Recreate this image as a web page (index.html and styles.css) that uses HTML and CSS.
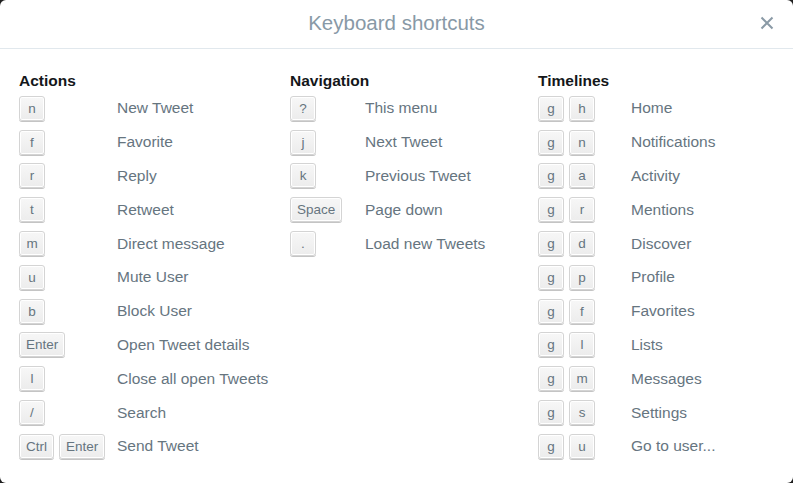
FILE: index.html
```html
<!DOCTYPE html>
<html>
<head>
<meta charset="utf-8">
<link rel="stylesheet" href="styles.css">
</head>
<body>
<div class="modal">
  <div class="header">
    <h1 class="title">Keyboard shortcuts</h1>
    <button class="close" aria-label="Close">
      <svg width="14" height="14" viewBox="0 0 14 14"><path d="M1.5 1.5 L12.5 12.5 M12.5 1.5 L1.5 12.5" stroke="#8a9aa6" stroke-width="2" fill="none"/></svg>
    </button>
  </div>
  <div class="body">
    <section class="col col-actions">
      <h2 class="heading">Actions</h2>
      <div class="row"><div class="keys"><kbd>n</kbd></div><span class="desc">New Tweet</span></div>
      <div class="row"><div class="keys"><kbd>f</kbd></div><span class="desc">Favorite</span></div>
      <div class="row"><div class="keys"><kbd>r</kbd></div><span class="desc">Reply</span></div>
      <div class="row"><div class="keys"><kbd>t</kbd></div><span class="desc">Retweet</span></div>
      <div class="row"><div class="keys"><kbd>m</kbd></div><span class="desc">Direct message</span></div>
      <div class="row"><div class="keys"><kbd>u</kbd></div><span class="desc">Mute User</span></div>
      <div class="row"><div class="keys"><kbd>b</kbd></div><span class="desc">Block User</span></div>
      <div class="row"><div class="keys"><kbd>Enter</kbd></div><span class="desc">Open Tweet details</span></div>
      <div class="row"><div class="keys"><kbd>l</kbd></div><span class="desc">Close all open Tweets</span></div>
      <div class="row"><div class="keys"><kbd>/</kbd></div><span class="desc">Search</span></div>
      <div class="row"><div class="keys"><kbd>Ctrl</kbd><kbd>Enter</kbd></div><span class="desc">Send Tweet</span></div>
    </section>
    <section class="col col-nav">
      <h2 class="heading">Navigation</h2>
      <div class="row"><div class="keys"><kbd>?</kbd></div><span class="desc">This menu</span></div>
      <div class="row"><div class="keys"><kbd>j</kbd></div><span class="desc">Next Tweet</span></div>
      <div class="row"><div class="keys"><kbd>k</kbd></div><span class="desc">Previous Tweet</span></div>
      <div class="row"><div class="keys"><kbd>Space</kbd></div><span class="desc">Page down</span></div>
      <div class="row"><div class="keys"><kbd>.</kbd></div><span class="desc">Load new Tweets</span></div>
    </section>
    <section class="col col-timelines">
      <h2 class="heading">Timelines</h2>
      <div class="row"><div class="keys"><kbd>g</kbd><kbd>h</kbd></div><span class="desc">Home</span></div>
      <div class="row"><div class="keys"><kbd>g</kbd><kbd>n</kbd></div><span class="desc">Notifications</span></div>
      <div class="row"><div class="keys"><kbd>g</kbd><kbd>a</kbd></div><span class="desc">Activity</span></div>
      <div class="row"><div class="keys"><kbd>g</kbd><kbd>r</kbd></div><span class="desc">Mentions</span></div>
      <div class="row"><div class="keys"><kbd>g</kbd><kbd>d</kbd></div><span class="desc">Discover</span></div>
      <div class="row"><div class="keys"><kbd>g</kbd><kbd>p</kbd></div><span class="desc">Profile</span></div>
      <div class="row"><div class="keys"><kbd>g</kbd><kbd>f</kbd></div><span class="desc">Favorites</span></div>
      <div class="row"><div class="keys"><kbd>g</kbd><kbd>l</kbd></div><span class="desc">Lists</span></div>
      <div class="row"><div class="keys"><kbd>g</kbd><kbd>m</kbd></div><span class="desc">Messages</span></div>
      <div class="row"><div class="keys"><kbd>g</kbd><kbd>s</kbd></div><span class="desc">Settings</span></div>
      <div class="row"><div class="keys"><kbd>g</kbd><kbd>u</kbd></div><span class="desc">Go to user...</span></div>
    </section>
  </div>
</div>
</body>
</html>
```

FILE: styles.css
```css
html, body {
  margin: 0;
  padding: 0;
  height: 100%;
  background: #1f1f1f;
}
body {
  font-family: "Liberation Sans", Arial, sans-serif;
}
.modal {
  height: 483px;
  width: 793px;
  background: #fff;
  border-radius: 6px;
  overflow: hidden;
  display: flex;
  flex-direction: column;
}
.header {
  height: 48px;
  border-bottom: 1px solid #e1e8ed;
  display: flex;
  align-items: center;
  justify-content: center;
  position: relative;
}
.title {
  margin: 0;
  font-size: 20.5px;
  font-weight: normal;
  color: #8899a6;
  line-height: 24px;
  padding-bottom: 2px;
}
.close {
  position: absolute;
  right: 19px;
  top: 16px;
  width: 14px;
  height: 14px;
  padding: 0;
  border: 0;
  background: none;
  display: flex;
}
.body {
  display: grid;
  grid-template-columns: 271px 248px 1fr;
  padding: 22px 0 0 19px;
}
.col {
  display: flex;
  flex-direction: column;
}
.col-actions { --keyw: 98px; }
.col-nav { --keyw: 75px; }
.col-timelines { --keyw: 93px; }
.heading {
  margin: 0;
  font-size: 15.5px;
  font-weight: bold;
  color: #14171a;
  line-height: 20px;
}
.row {
  display: grid;
  grid-template-columns: var(--keyw) 1fr;
  align-items: center;
  height: 33.8px;
}
.keys {
  display: flex;
  gap: 5px;
  align-items: center;
  padding-top: 1px;
}
kbd {
  box-sizing: border-box;
  min-width: 26px;
  height: 25px;
  padding: 0 6px;
  display: inline-flex;
  align-items: center;
  justify-content: center;
  font-family: "Liberation Sans", Arial, sans-serif;
  font-size: 13.5px;
  color: #66757f;
  background: linear-gradient(#f7f7f7, #ececec);
  border: 1px solid #d4d4d4;
  border-radius: 3px;
  box-shadow: 0 1px 0 #c4c4c4, inset 0 0 0 1px #fff;
}
.desc {
  font-size: 15.5px;
  color: #66757f;
  white-space: nowrap;
  padding-top: 1px;
}
```
